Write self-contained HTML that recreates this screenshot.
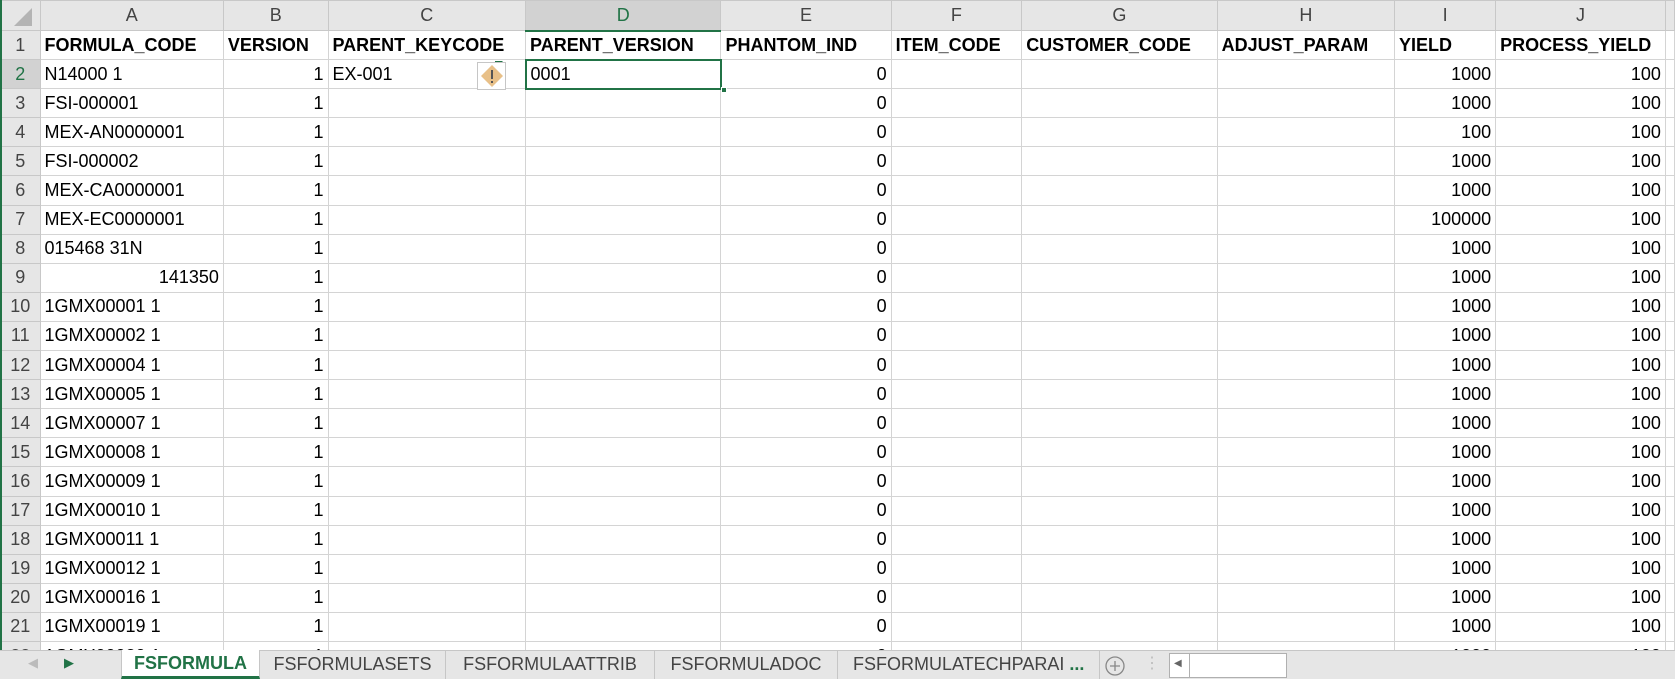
<!DOCTYPE html>
<html><head><meta charset="utf-8"><style>
*{margin:0;padding:0;box-sizing:border-box}
body{width:1675px;height:679px;overflow:hidden;background:#fff;font-family:"Liberation Sans",sans-serif;position:relative}
table{border-collapse:collapse;table-layout:fixed;position:absolute;left:0;top:0}
td{border:1px solid #d4d4d4;font-size:18px;color:#000;height:29.1px;padding:0 4px;white-space:nowrap;overflow:hidden}
tr.h td{height:30px;background:#e6e6e6;color:#444;text-align:center;border-color:#c8c8c8;font-size:18px}
td.rh{background:#e6e6e6;color:#444;text-align:center;border-color:#c8c8c8;padding:0}
tr.b td{font-weight:bold}
.r{text-align:right}
.tabs{position:absolute;left:0;top:650px;width:1675px;height:29px;background:#e6e6e6;border-top:1px solid #c6c6c6;font-size:18px;color:#444}
.tab{position:absolute;top:0;height:28px;line-height:27px;text-align:center;border-right:1px solid #c6c6c6}
</style></head><body>
<table>
<colgroup><col style="width:40px"><col style="width:184px"><col style="width:105px"><col style="width:198px"><col style="width:196px"><col style="width:171px"><col style="width:131px"><col style="width:196px"><col style="width:178px"><col style="width:102px"><col style="width:170px"><col style="width:4px"></colgroup>
<tr class="h"><td style="background:#e6e6e6"></td><td>A</td><td>B</td><td>C</td><td style="background:#d2d2d2;color:#217346;border-bottom:2px solid #217346">D</td><td>E</td><td>F</td><td>G</td><td>H</td><td>I</td><td>J</td><td></td></tr>
<tr class="b"><td class="rh" style="font-weight:normal">1</td><td>FORMULA_CODE</td><td>VERSION</td><td>PARENT_KEYCODE</td><td>PARENT_VERSION</td><td>PHANTOM_IND</td><td>ITEM_CODE</td><td>CUSTOMER_CODE</td><td>ADJUST_PARAM</td><td>YIELD</td><td>PROCESS_YIELD</td><td></td></tr>
<tr><td class="rh" style="color:#217346;background:#d2d2d2">2</td><td>N14000 1</td><td class="r">1</td><td>EX-001</td><td style="border:2px solid #217346">0001</td><td class="r">0</td><td></td><td></td><td></td><td class="r">1000</td><td class="r">100</td><td></td></tr>
<tr><td class="rh">3</td><td>FSI-000001</td><td class="r">1</td><td></td><td></td><td class="r">0</td><td></td><td></td><td></td><td class="r">1000</td><td class="r">100</td><td></td></tr>
<tr><td class="rh">4</td><td>MEX-AN0000001</td><td class="r">1</td><td></td><td></td><td class="r">0</td><td></td><td></td><td></td><td class="r">100</td><td class="r">100</td><td></td></tr>
<tr><td class="rh">5</td><td>FSI-000002</td><td class="r">1</td><td></td><td></td><td class="r">0</td><td></td><td></td><td></td><td class="r">1000</td><td class="r">100</td><td></td></tr>
<tr><td class="rh">6</td><td>MEX-CA0000001</td><td class="r">1</td><td></td><td></td><td class="r">0</td><td></td><td></td><td></td><td class="r">1000</td><td class="r">100</td><td></td></tr>
<tr><td class="rh">7</td><td>MEX-EC0000001</td><td class="r">1</td><td></td><td></td><td class="r">0</td><td></td><td></td><td></td><td class="r">100000</td><td class="r">100</td><td></td></tr>
<tr><td class="rh">8</td><td>015468 31N</td><td class="r">1</td><td></td><td></td><td class="r">0</td><td></td><td></td><td></td><td class="r">1000</td><td class="r">100</td><td></td></tr>
<tr><td class="rh">9</td><td class="r">141350</td><td class="r">1</td><td></td><td></td><td class="r">0</td><td></td><td></td><td></td><td class="r">1000</td><td class="r">100</td><td></td></tr>
<tr><td class="rh">10</td><td>1GMX00001 1</td><td class="r">1</td><td></td><td></td><td class="r">0</td><td></td><td></td><td></td><td class="r">1000</td><td class="r">100</td><td></td></tr>
<tr><td class="rh">11</td><td>1GMX00002 1</td><td class="r">1</td><td></td><td></td><td class="r">0</td><td></td><td></td><td></td><td class="r">1000</td><td class="r">100</td><td></td></tr>
<tr><td class="rh">12</td><td>1GMX00004 1</td><td class="r">1</td><td></td><td></td><td class="r">0</td><td></td><td></td><td></td><td class="r">1000</td><td class="r">100</td><td></td></tr>
<tr><td class="rh">13</td><td>1GMX00005 1</td><td class="r">1</td><td></td><td></td><td class="r">0</td><td></td><td></td><td></td><td class="r">1000</td><td class="r">100</td><td></td></tr>
<tr><td class="rh">14</td><td>1GMX00007 1</td><td class="r">1</td><td></td><td></td><td class="r">0</td><td></td><td></td><td></td><td class="r">1000</td><td class="r">100</td><td></td></tr>
<tr><td class="rh">15</td><td>1GMX00008 1</td><td class="r">1</td><td></td><td></td><td class="r">0</td><td></td><td></td><td></td><td class="r">1000</td><td class="r">100</td><td></td></tr>
<tr><td class="rh">16</td><td>1GMX00009 1</td><td class="r">1</td><td></td><td></td><td class="r">0</td><td></td><td></td><td></td><td class="r">1000</td><td class="r">100</td><td></td></tr>
<tr><td class="rh">17</td><td>1GMX00010 1</td><td class="r">1</td><td></td><td></td><td class="r">0</td><td></td><td></td><td></td><td class="r">1000</td><td class="r">100</td><td></td></tr>
<tr><td class="rh">18</td><td>1GMX00011 1</td><td class="r">1</td><td></td><td></td><td class="r">0</td><td></td><td></td><td></td><td class="r">1000</td><td class="r">100</td><td></td></tr>
<tr><td class="rh">19</td><td>1GMX00012 1</td><td class="r">1</td><td></td><td></td><td class="r">0</td><td></td><td></td><td></td><td class="r">1000</td><td class="r">100</td><td></td></tr>
<tr><td class="rh">20</td><td>1GMX00016 1</td><td class="r">1</td><td></td><td></td><td class="r">0</td><td></td><td></td><td></td><td class="r">1000</td><td class="r">100</td><td></td></tr>
<tr><td class="rh">21</td><td>1GMX00019 1</td><td class="r">1</td><td></td><td></td><td class="r">0</td><td></td><td></td><td></td><td class="r">1000</td><td class="r">100</td><td></td></tr>
<tr><td class="rh">22</td><td>1GMX00020 1</td><td class="r">1</td><td></td><td></td><td class="r">0</td><td></td><td></td><td></td><td class="r">1000</td><td class="r">100</td><td></td></tr>
</table>
<div style="position:absolute;left:0;top:0;width:2px;height:650px;background:#217346"></div>
<svg style="position:absolute;left:12px;top:6px" width="22" height="22"><polygon points="20,2 20,20 2,20" fill="#b4b4b4"/></svg>
<svg style="position:absolute;left:495px;top:61px" width="9" height="9"><polygon points="0,0 8,0 0,8" fill="#217346"/></svg>
<div style="position:absolute;left:477px;top:62px;width:29px;height:28px;border:1px solid #c6c6c6;background:#fff"></div>
<svg style="position:absolute;left:480px;top:64px" width="24" height="24"><polygon points="12,1 23,12 12,23 1,12" fill="#e8c088"/><rect x="11" y="6" width="2" height="9" fill="#555"/><rect x="11" y="17" width="2" height="2" fill="#555"/></svg>
<div style="position:absolute;left:721px;top:87px;width:6px;height:6px;background:#217346;border:1px solid #fff"></div>
<div class="tabs">
<span style="position:absolute;left:28px;top:4px;color:#bbb;font-size:13px">◀</span>
<span style="position:absolute;left:64px;top:4px;color:#217346;font-size:13px">▶</span>
<div class="tab" style="left:121px;width:139px;background:#fff;color:#217346;font-weight:bold;border-left:1px solid #c6c6c6;top:-1px;height:29px;border-bottom:3px solid #217346">FSFORMULA</div>
<div class="tab" style="left:260px;width:186px">FSFORMULASETS</div>
<div class="tab" style="left:446px;width:209px">FSFORMULAATTRIB</div>
<div class="tab" style="left:655px;width:183px">FSFORMULADOC</div>
<div class="tab" style="left:838px;width:262px;text-align:left;padding-left:15px">FSFORMULATECHPARAI <b style="color:#217346">...</b></div>
<svg style="position:absolute;left:1104px;top:4px" width="22" height="22"><circle cx="11" cy="11" r="9" fill="none" stroke="#888" stroke-width="1.3"/><path d="M11 6v10M6 11h10" stroke="#888" stroke-width="1.3"/></svg>
<span style="position:absolute;left:1144px;top:2px;color:#bbb;font-size:16px">⋮</span>
<div style="position:absolute;left:1169px;top:2px;width:118px;height:25px;background:#fff;border:1px solid #b0b0b0"></div>
<div style="position:absolute;left:1189px;top:2px;width:1px;height:25px;background:#b0b0b0"></div>
<span style="position:absolute;left:1174px;top:7px;color:#666;font-size:10px">◀</span>
</div>
</body></html>
